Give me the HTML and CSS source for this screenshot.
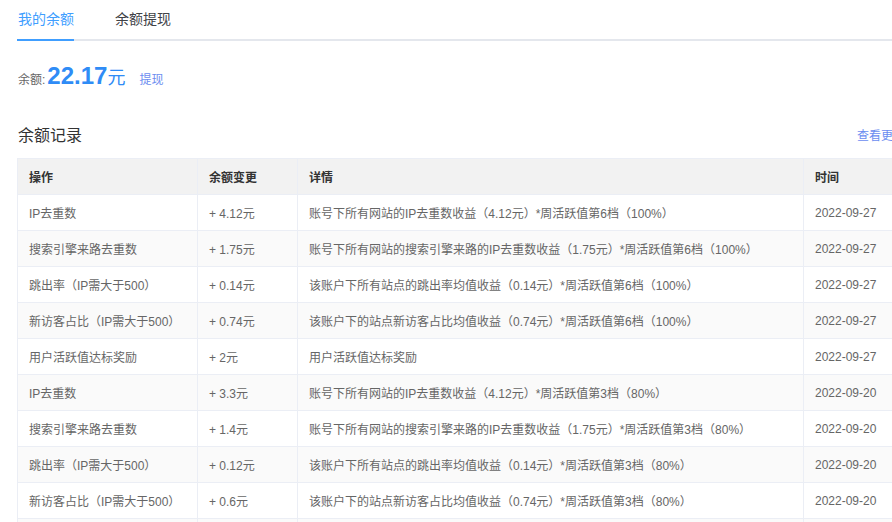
FILE: index.html
```html
<!DOCTYPE html>
<html lang="zh-CN">
<head>
    <meta charset="UTF-8">
    <meta name="viewport" content="width=device-width, initial-scale=1.0">
    <title>我的余额</title>
    <link rel="stylesheet" href="styles.css">
</head>
<body>
    <div class="page">
        <div class="tabs">
            <div class="tab active">我的余额</div>
            <div class="tab">余额提现</div>
        </div>

        <div class="balance">
            <span class="balance-label">余额:</span>
            <span class="balance-num">22.17</span><span class="balance-unit">元</span>
            <a class="balance-link" href="#">提现</a>
        </div>

        <div class="section-head">
            <div class="section-title">余额记录</div>
            <a class="more-link" href="#">查看更多</a>
        </div>

        <table class="records">
            <colgroup>
                <col class="col-op">
                <col class="col-change">
                <col class="col-detail">
                <col class="col-time">
            </colgroup>
            <thead>
                <tr>
                    <th>操作</th>
                    <th>余额变更</th>
                    <th>详情</th>
                    <th>时间</th>
                </tr>
            </thead>
            <tbody>
                <tr>
                    <td>IP去重数</td>
                    <td>+ 4.12元</td>
                    <td>账号下所有网站的IP去重数收益（4.12元）*周活跃值第6档（100%）</td>
                    <td>2022-09-27</td>
                </tr>
                <tr>
                    <td>搜索引擎来路去重数</td>
                    <td>+ 1.75元</td>
                    <td>账号下所有网站的搜索引擎来路的IP去重数收益（1.75元）*周活跃值第6档（100%）</td>
                    <td>2022-09-27</td>
                </tr>
                <tr>
                    <td>跳出率（IP需大于500）</td>
                    <td>+ 0.14元</td>
                    <td>该账户下所有站点的跳出率均值收益（0.14元）*周活跃值第6档（100%）</td>
                    <td>2022-09-27</td>
                </tr>
                <tr>
                    <td>新访客占比（IP需大于500）</td>
                    <td>+ 0.74元</td>
                    <td>该账户下的站点新访客占比均值收益（0.74元）*周活跃值第6档（100%）</td>
                    <td>2022-09-27</td>
                </tr>
                <tr>
                    <td>用户活跃值达标奖励</td>
                    <td>+ 2元</td>
                    <td>用户活跃值达标奖励</td>
                    <td>2022-09-27</td>
                </tr>
                <tr>
                    <td>IP去重数</td>
                    <td>+ 3.3元</td>
                    <td>账号下所有网站的IP去重数收益（4.12元）*周活跃值第3档（80%）</td>
                    <td>2022-09-20</td>
                </tr>
                <tr>
                    <td>搜索引擎来路去重数</td>
                    <td>+ 1.4元</td>
                    <td>账号下所有网站的搜索引擎来路的IP去重数收益（1.75元）*周活跃值第3档（80%）</td>
                    <td>2022-09-20</td>
                </tr>
                <tr>
                    <td>跳出率（IP需大于500）</td>
                    <td>+ 0.12元</td>
                    <td>该账户下所有站点的跳出率均值收益（0.14元）*周活跃值第3档（80%）</td>
                    <td>2022-09-20</td>
                </tr>
                <tr>
                    <td>新访客占比（IP需大于500）</td>
                    <td>+ 0.6元</td>
                    <td>该账户下的站点新访客占比均值收益（0.74元）*周活跃值第3档（80%）</td>
                    <td>2022-09-20</td>
                </tr>
                <tr>
                    <td>用户活跃值达标奖励</td>
                    <td>+ 2元</td>
                    <td>用户活跃值达标奖励</td>
                    <td>2022-09-20</td>
                </tr>
            </tbody>
        </table>
    </div>
</body>
</html>
```

FILE: styles.css
```css
/* Page */
html, body {
    overflow: hidden;
}

body {
    margin: 0;
    font-family: "Liberation Sans", "Noto Sans CJK SC", sans-serif;
    font-size: 12px;
    color: #666666;
    background: #ffffff;
}

.page {
    width: 888px;
    padding-left: 17px;
}

a {
    text-decoration: none;
}

/* Tabs */
.tabs {
    display: flex;
    border-bottom: 2px solid #e4e7ed;
    width: 875px;
}

.tab {
    font-size: 14px;
    line-height: 39px;
    color: #404246;
    padding: 0 21px;
    margin-bottom: -2px;
    border-bottom: 2px solid transparent;
}

.tab:first-child {
    padding-left: 1px;
    margin-right: 20px;
    padding-right: 0;
}

.tab.active {
    color: #409eff;
    border-bottom-color: #409eff;
}

/* Balance */
.balance {
    margin-top: 22px;
    display: flex;
    align-items: baseline;
    line-height: 26px;
    padding-left: 1px;
}

.balance-label {
    font-size: 12px;
    color: #666666;
    margin-right: 2px;
}

.balance-num {
    font-size: 24px;
    font-weight: bold;
    color: #2f8cf6;
}

.balance-unit {
    font-size: 18px;
    color: #2f8cf6;
}

.balance-link {
    font-size: 12px;
    color: #6b8df0;
    margin-left: 14px;
}

/* Section header */
.section-head {
    margin-top: 31px;
    display: flex;
    justify-content: space-between;
    align-items: center;
    line-height: 24px;
}

.section-title {
    font-size: 16px;
    color: #333333;
    padding-left: 1px;
}

.more-link {
    font-size: 12px;
    color: #6b8df0;
}

/* Records table */
.records {
    margin-top: 10px;
    width: 888px;
    border-collapse: collapse;
    table-layout: fixed;
    border: 1px solid #ebeef5;
}

.col-op { width: 180px; }
.col-change { width: 100px; }
.col-detail { width: 506px; }

.records th,
.records td {
    height: 35px;
    padding: 0 11px;
    border: 1px solid #ebeef5;
    text-align: left;
    white-space: nowrap;
    overflow: hidden;
}

.records th {
    background: #f2f2f2;
    color: #333333;
    font-weight: bold;
}

.records td {
    color: #666666;
}

.records tbody tr:nth-child(even) td {
    background: #fafafa;
}
```
